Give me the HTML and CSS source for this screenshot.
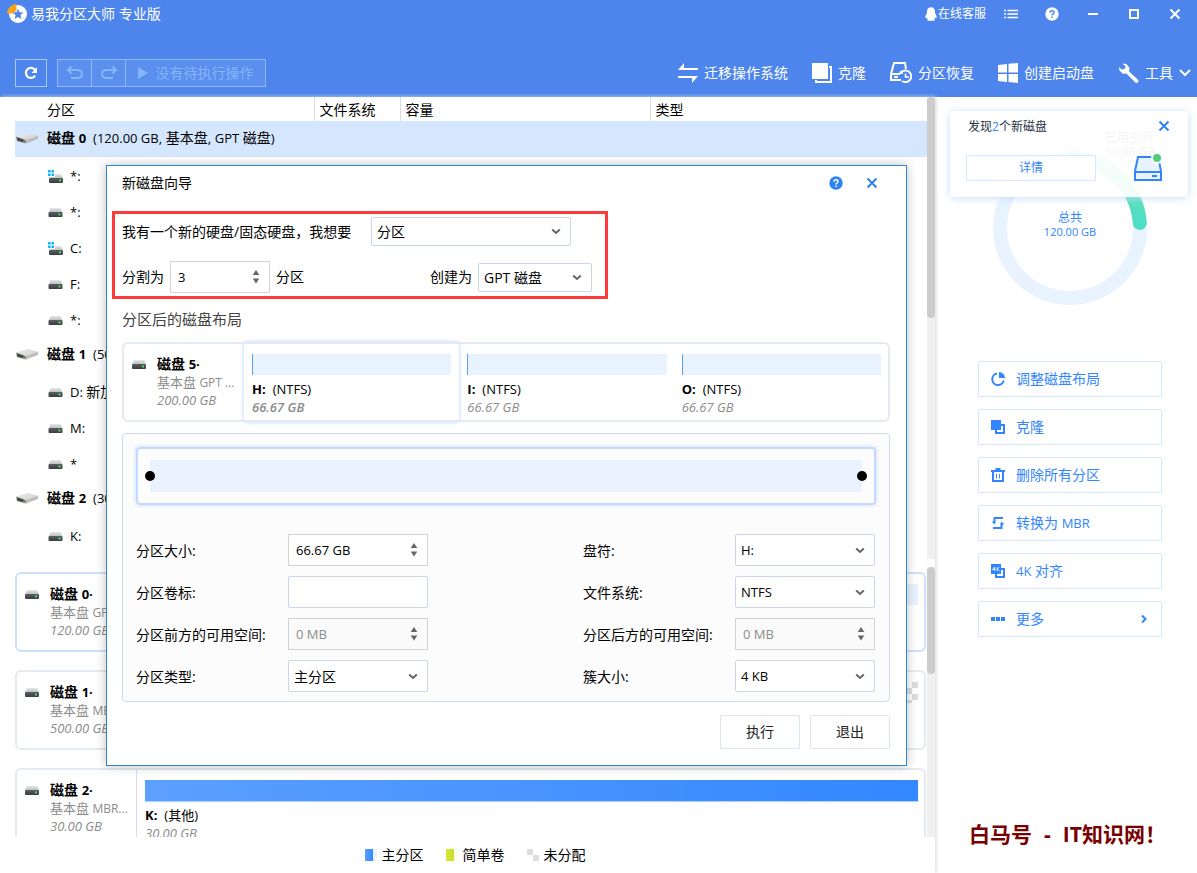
FILE: index.html
```html
<!DOCTYPE html>
<html lang="zh-CN">
<head>
<meta charset="utf-8">
<title>易我分区大师 专业版</title>
<link rel="stylesheet" href="styles.css">
</head>
<body>
<svg class="defs" aria-hidden="true">
  <defs>
    <linearGradient id="lid" x1="0" y1="0" x2="0" y2="1"><stop offset="0" stop-color="#e4e6e8"/><stop offset="1" stop-color="#b9bcc0"/></linearGradient>
    <linearGradient id="front" x1="0" y1="0" x2="0" y2="1"><stop offset="0" stop-color="#5d6063"/><stop offset="1" stop-color="#3a3c3f"/></linearGradient>
    <linearGradient id="top3d" x1="0" y1="0" x2="1" y2="1"><stop offset="0" stop-color="#ededed"/><stop offset="1" stop-color="#cfcfcf"/></linearGradient>
    <linearGradient id="used" x1="0" y1="0" x2="0" y2="1"><stop offset="0" stop-color="#62dd9d"/><stop offset="1" stop-color="#4fdfc8"/></linearGradient>
  </defs>
  <symbol id="volume" viewBox="0 0 14 9"><path d="M2 0h10l2 4.500H0z" fill="url(#lid)"/><rect y="4" width="14" height="5" rx="1" fill="url(#front)"/><rect x="10" y="5.500" width="2" height="2" fill="#3fe05a"/></symbol>
  <symbol id="winvolume" viewBox="0 0 15 13"><path d="M0 0h2.600v2.600H0zM3.400 0H6v2.600H3.400zM0 3.400h2.600V6H0zM3.400 3.400H6V6H3.400z" fill="#12b5f5"/><path d="M7 4h6l2 4.500H1L2.500 7H7z" fill="url(#lid)"/><rect x="1" y="8" width="14" height="5" rx="1" fill="url(#front)"/><rect x="11" y="9.500" width="2" height="2" fill="#3fe05a"/></symbol>
  <symbol id="disk" viewBox="0 0 22 12"><path d="M0 4.500L12 1l10 2.500-12 4.500z" fill="url(#top3d)"/><path d="M0 4.500L10 8v3.500L1 9z" fill="#8b8d88"/><path d="M.8 5.500l6.700 2v2.800l-6-1.600z" fill="#454743"/><path d="M10 8l12-4.500V7l-12 4.500z" fill="#bdbdbd"/><path d="M7.500 8l1.500.500v1.800l-1.500-.4z" fill="#5c9c62"/></symbol>
  <symbol id="chev" viewBox="0 0 10 7"><path d="M1.200 1.500L5 5l3.800-3.500" fill="none" stroke="currentColor" stroke-width="2"/></symbol>
  <symbol id="spin" viewBox="0 0 8 14"><path d="M4 0l3.300 5H.7zM4 13.500L.7 8.500h6.600z" fill="#666"/></symbol>
  <symbol id="cross" viewBox="0 0 12 12"><path d="M1.500 1.500l9 9M10.500 1.500l-9 9" fill="none" stroke="currentColor" stroke-width="2"/></symbol>
  <symbol id="help" viewBox="0 0 14 14"><circle cx="7" cy="7" r="6.700" fill="currentColor"/><path d="M5 5.700C5 4.400 5.900 3.700 7 3.700s2 .7 2 1.700c0 1.400-1.900 1.500-1.900 3" fill="none" stroke="var(--mark)" stroke-width="1.400"/><rect x="6.300" y="9.500" width="1.500" height="1.500" fill="var(--mark)"/></symbol>
</svg>

<div class="app">
  <header class="head">
    <div class="titlebar">
      <svg class="logo" width="20" height="20" viewBox="0 0 20 20"><circle cx="11" cy="10" r="9" fill="#fff"/><path d="M0 9.500C.5 4 4 .5 9.500 0v6.500L6 9.500z" fill="#f9a61a"/><path d="M11 4.500l1.500 3.800 4 .2-3.100 2.600 1.100 4-3.500-2.200L7.600 15l1-3.900-3.100-2.600 4-.2z" fill="#4c85ec"/></svg>
      <h1 class="apptitle">易我分区大师 专业版</h1>
      <a class="service" href="#"><svg width="12" height="14" viewBox="0 0 12 14"><path d="M6 .3c2.600 0 4 1.900 4 4.300v1.600C11.300 8 12 9.800 11.500 11c-.3.600-.9.200-1.300-.4-.2.700-.5 1.200-1 1.700 1 .4.900 1.400-.5 1.400H3.300c-1.400 0-1.500-1-.5-1.400-.5-.5-.8-1-1-1.700-.4.600-1 1-1.300.4C0 9.800.7 8 2 6.200V4.600C2 2.200 3.400.3 6 .3z" fill="#fff"/></svg>在线客服</a>
      <button class="win" aria-label="菜单"><svg width="14" height="10" viewBox="0 0 14 10"><path d="M0 1.500h2M0 5h2M0 8.500h2M3.500 1.500H14M3.500 5H14M3.500 8.500H14" stroke="#fff" stroke-width="1.500"/></svg></button>
      <button class="win" aria-label="帮助"><svg width="14" height="14"><use href="#help"/></svg></button>
      <button class="win" aria-label="最小化"><svg width="10" height="10" viewBox="0 0 10 10"><path d="M0 5h10" stroke="#fff" stroke-width="2"/></svg></button>
      <button class="win" aria-label="最大化"><svg width="10" height="10" viewBox="0 0 10 10"><path d="M1 1h8v8H1z" fill="none" stroke="#fff" stroke-width="2"/></svg></button>
      <button class="win" aria-label="关闭"><svg width="12" height="12"><use href="#cross"/></svg></button>
    </div>
    <div class="toolbar">
      <button class="tool refresh" aria-label="刷新"><svg width="14" height="14" viewBox="0 0 14 14"><path d="M11.200 9.500A5 5 0 1 1 11 4" fill="none" stroke="#fff" stroke-width="2.200"/><path d="M13 1v6H7.500z" fill="#fff"/></svg></button>
      <div class="group">
        <button class="tool" aria-label="撤销" disabled><svg width="18" height="14" viewBox="0 0 18 14"><path d="M2 4h9c3 0 5 1.400 5 4s-2 4-5 4H5M5.500.5L2 4l3.500 3.500" fill="none" stroke="currentColor" stroke-width="2"/></svg></button>
        <button class="tool" aria-label="重做" disabled><svg width="18" height="14" viewBox="0 0 18 14"><path d="M16 4H7C4 4 2 5.400 2 8s2 4 5 4h6M12.500.5L16 4l-3.500 3.500" fill="none" stroke="currentColor" stroke-width="2"/></svg></button>
        <button class="tool pending" disabled><svg width="10" height="12" viewBox="0 0 10 12"><path d="M0 0l10 6-10 6z" fill="currentColor"/></svg>没有待执行操作</button>
      </div>
      <nav class="actions">
        <button class="action"><svg width="20" height="20" viewBox="0 0 20 20"><path d="M0 7l6-7v5h14v2zM0 13h20l-6 7v-5H0z" fill="#fff"/></svg>迁移操作系统</button>
        <button class="action"><svg width="20" height="20" viewBox="0 0 20 20"><path d="M0 0h16v16H0z" fill="#fff"/><path d="M17 4h2v15H4v-2" fill="none" stroke="#fff" stroke-width="2"/></svg>克隆</button>
        <button class="action"><svg width="22" height="22" viewBox="0 0 22 22"><path d="M11 18H1v-6L4 1h11l1 6M1 12h9" fill="none" stroke="#fff" stroke-width="2"/><path d="M4 15h4" stroke="#fff" stroke-width="2"/><path d="M11 10.500A5.800 5.800 0 1 1 12 19" fill="none" stroke="#fff" stroke-width="2"/><path d="M8.500 12.500l2-4 3 3z" fill="#fff"/><path d="M15.500 11.500v3.500h3.500" fill="none" stroke="#fff" stroke-width="1.500"/></svg>分区恢复</button>
        <button class="action"><svg width="20" height="20" viewBox="0 0 20 20"><path d="M0 2l9-1v8.500H0zM10.500.800L20 0v9.500h-9.500zM0 11h9v8l-9-1zM10.500 11H20v9l-9.500-1z" fill="#fff"/></svg>创建启动盘</button>
        <button class="action"><svg width="21" height="20" viewBox="0 0 21 20"><path d="M4 .5l4.500.4 3 4-.5 3.500 8.800 8c1 1 .7 2.300.2 2.900-.8.700-2 .8-3 0L8.500 10.500l-3.700.2L1.500 7.500.8 4l3 2.500 3-.7.800-2.500z" fill="#fff"/></svg>工具<svg width="12" height="8" viewBox="0 0 12 8"><path d="M1 1l5 5 5-5" fill="none" stroke="#fff" stroke-width="2"/></svg></button>
      </nav>
    </div>
  </header>

  <div class="body">
    <main class="main">
      <section class="listing">
        <table class="tree">
          <colgroup><col class="c-name"><col class="c-fs"><col class="c-cap"><col></colgroup>
          <thead><tr><th>分区</th><th>文件系统</th><th>容量</th><th>类型</th></tr></thead>
          <tbody>
            <tr class="selected"><td colspan="4"><div class="diskrow"><svg width="22" height="12"><use href="#disk"/></svg><b>磁盘 <span class="en">0</span></b><span><span class="en">(120.00 GB,</span> 基本盘<span class="en">,</span> <span class="en">GPT</span> 磁盘<span class="en">)</span></span></div></td></tr>
            <tr><td colspan="4"><div class="volrow"><svg width="15" height="13"><use href="#winvolume"/></svg>*:</div></td></tr>
            <tr><td colspan="4"><div class="volrow"><svg width="15" height="9"><use href="#volume"/></svg>*:</div></td></tr>
            <tr><td colspan="4"><div class="volrow"><svg width="15" height="13"><use href="#winvolume"/></svg>C:</div></td></tr>
            <tr><td colspan="4"><div class="volrow"><svg width="15" height="9"><use href="#volume"/></svg>F:</div></td></tr>
            <tr><td colspan="4"><div class="volrow"><svg width="15" height="9"><use href="#volume"/></svg>*:</div></td></tr>
            <tr><td colspan="4"><div class="diskrow"><svg width="22" height="12"><use href="#disk"/></svg><b>磁盘 <span class="en">1</span></b><span class="en">(500.00 GB)</span></div></td></tr>
            <tr><td colspan="4"><div class="volrow"><svg width="15" height="9"><use href="#volume"/></svg><span>D: <span class="cn">新加卷</span></span></div></td></tr>
            <tr><td colspan="4"><div class="volrow"><svg width="15" height="9"><use href="#volume"/></svg>M:</div></td></tr>
            <tr><td colspan="4"><div class="volrow"><svg width="15" height="9"><use href="#volume"/></svg>*</div></td></tr>
            <tr><td colspan="4"><div class="diskrow"><svg width="22" height="12"><use href="#disk"/></svg><b>磁盘 <span class="en">2</span></b><span class="en">(30.00 GB)</span></div></td></tr>
            <tr><td colspan="4"><div class="volrow"><svg width="15" height="9"><use href="#volume"/></svg>K:</div></td></tr>
          </tbody>
        </table>
        <div class="track"><div class="thumb long"></div></div>
      </section>
      <section class="map">
        <div class="cards">
          <article class="card active">
            <div class="info"><svg width="14" height="9"><use href="#volume"/></svg><div><b>磁盘 <span class="en">0·</span></b><p>基本盘 <span class="en">GPT ...</span></p><i>120.00 GB</i></div></div>
            <div class="part"><div class="bar light"></div></div>
          </article>
          <article class="card">
            <div class="info"><svg width="14" height="9"><use href="#volume"/></svg><div><b>磁盘 <span class="en">1·</span></b><p>基本盘 <span class="en">MBR...</span></p><i>500.00 GB</i></div></div>
            <div class="part"><div class="bar checker"></div></div>
          </article>
          <article class="card">
            <div class="info"><svg width="14" height="9"><use href="#volume"/></svg><div><b>磁盘 <span class="en">2·</span></b><p>基本盘 <span class="en">MBR...</span></p><i>30.00 GB</i></div></div>
            <div class="part"><div class="bar full"></div><p class="vol"><b>K:</b>(其他)</p><i>30.00 GB</i></div>
          </article>
        </div>
        <div class="track"><div class="thumb short"></div></div>
      </section>
      <footer class="legend">
        <span class="key"><i class="swatch primary"></i>主分区</span>
        <span class="key"><i class="swatch simple"></i>简单卷</span>
        <span class="key"><i class="swatch free"></i>未分配</span>
      </footer>
    </main>

    <aside class="side">
      <div class="usage">
        <svg width="154" height="154" viewBox="0 0 154 154"><circle cx="77" cy="77" r="70" fill="none" stroke="#e8f3ff" stroke-width="14"/><path d="M77 7A70 70 0 0 1 146.800 72" fill="none" stroke="url(#used)" stroke-width="14" stroke-linecap="round"/></svg>
        <p class="total">总共<br><span>120.00 GB</span></p>
        <p class="usedlabel">已用空间<br>30.08 GB</p>
      </div>
      <div class="ops">
        <button class="op"><svg width="14" height="14" viewBox="0 0 14 14"><path d="M6 1.500A5.800 5.800 0 1 0 12.700 8.500" fill="none" stroke="currentColor" stroke-width="2"/><path d="M8 0a6 6 0 0 1 6 6H8z" fill="currentColor"/></svg>调整磁盘布局</button>
        <button class="op"><svg width="14" height="14" viewBox="0 0 14 14"><path d="M0 0h10v10H0z" fill="currentColor"/><path d="M10 5h3v8H5v-3" fill="none" stroke="currentColor" stroke-width="2"/></svg>克隆</button>
        <button class="op"><svg width="14" height="14" viewBox="0 0 14 14"><path d="M0 3h14M4.500 1h5M2 3v10h10V3" fill="none" stroke="currentColor" stroke-width="2"/><path d="M5.500 6v4.500M8.500 6v4.500" stroke="currentColor"/></svg>删除所有分区</button>
        <button class="op"><svg width="14" height="14" viewBox="0 0 14 14"><path d="M12 2H3.500v5M2 12h8.500V7" fill="none" stroke="currentColor" stroke-width="2"/><path d="M.5 5.500h4L3.500 8.500zM9.500 8.500h4L10.500 5.500z" fill="currentColor"/></svg>转换为 <span class="en">MBR</span></button>
        <button class="op"><svg width="14" height="14" viewBox="0 0 14 14"><path d="M0 0h10v10H0z" fill="currentColor"/><path d="M10 5h3v8H5v-3" fill="none" stroke="currentColor" stroke-width="2"/><path d="M3.500 7V3L1.500 5.500h3M6 3v4M8.500 3L6.300 5l2.200 2" fill="none" stroke="#fff" stroke-width=".8"/></svg><span class="en">4K</span> 对齐</button>
        <button class="op"><svg width="14" height="14" viewBox="0 0 14 14"><path d="M0 5h4v4H0zM5 5h4v4H5zM10 5h4v4h-4z" fill="currentColor"/></svg>更多<svg class="more" width="6" height="10" viewBox="0 0 6 10"><path d="M1 1.500L4.500 5 1 8.500" fill="none" stroke="currentColor" stroke-width="2"/></svg></button>
      </div>
      <p class="mark">白马号<span class="dash">-</span>IT知识网！</p>
      <div class="notice">
        <div class="notice-text">
          <p>发现<em>2</em>个新磁盘</p>
          <button class="detail">详情</button>
        </div>
        <div class="notice-side">
          <button class="bare" aria-label="关闭通知"><svg width="12" height="12"><use href="#cross"/></svg></button>
          <svg width="30" height="28" viewBox="0 0 30 28"><path d="M2 17L5 3h20l3 14" fill="#e8f3ff" stroke="#3385ff" stroke-width="2"/><path d="M2 18h26v8H2z" fill="#e8f3ff" stroke="#3385ff" stroke-width="2"/><path d="M19 22h5" stroke="#3385ff" stroke-width="2"/><circle cx="24" cy="4" r="6" fill="#fff"/><circle cx="24" cy="4" r="4" fill="#53cd7c"/></svg>
        </div>
      </div>
    </aside>
  </div>

  <section class="dialog" role="dialog" aria-labelledby="dlg-title">
    <div class="dlg-head"><h2 id="dlg-title">新磁盘向导</h2>
      <button class="bare" aria-label="向导帮助"><svg width="14" height="14"><use href="#help"/></svg></button>
      <button class="bare" aria-label="关闭向导"><svg width="12" height="12"><use href="#cross"/></svg></button>
    </div>
    <div class="setup">
      <div class="setrow first">
        <label class="want" for="want">我有一个新的硬盘/固态硬盘，我想要</label>
        <span class="field low wide"><select id="want"><option>分区</option></select><svg width="10" height="7"><use href="#chev"/></svg></span>
      </div>
      <div class="setrow">
        <label class="split" for="count">分割为</label>
        <span class="field square narrow"><input id="count" type="text" value="3"><svg width="8" height="14"><use href="#spin"/></svg></span>
        <span class="unit">分区</span>
        <label class="split" for="style">创建为</label>
        <span class="field low style"><select id="style"><option>GPT 磁盘</option></select><svg width="10" height="7"><use href="#chev"/></svg></span>
      </div>
    </div>
    <h3>分区后的磁盘布局</h3>
    <article class="card plan">
      <div class="info"><svg width="14" height="9"><use href="#volume"/></svg><div><b>磁盘 <span class="en">5·</span></b><p>基本盘 <span class="en">GPT ...</span></p><i>200.00 GB</i></div></div>
      <div class="part chosen"><div class="bar empty"></div><p class="vol"><b>H:</b>(NTFS)</p><i>66.67 GB</i></div>
      <div class="part"><div class="bar empty"></div><p class="vol"><b>I:</b>(NTFS)</p><i>66.67 GB</i></div>
      <div class="part"><div class="bar empty"></div><p class="vol"><b>O:</b>(NTFS)</p><i>66.67 GB</i></div>
    </article>
    <div class="panel">
      <div class="resize"><button class="knob" aria-label="起点"></button><div class="span"></div><button class="knob" aria-label="终点"></button></div>
      <form class="form">
        <label for="size">分区大小:</label>
        <span class="field square"><input id="size" type="text" value="66.67 GB"><svg width="8" height="14"><use href="#spin"/></svg></span>
        <label class="right" for="letter">盘符:</label>
        <span class="field"><select id="letter"><option>H:</option></select><svg width="10" height="7"><use href="#chev"/></svg></span>
        <label for="label">分区卷标:</label>
        <span class="field"><input id="label" type="text"></span>
        <label class="right" for="fs">文件系统:</label>
        <span class="field"><select id="fs"><option>NTFS</option></select><svg width="10" height="7"><use href="#chev"/></svg></span>
        <label for="before">分区前方的可用空间:</label>
        <span class="field square off"><input id="before" type="text" value="0 MB" disabled><svg width="8" height="14"><use href="#spin"/></svg></span>
        <label class="right" for="after">分区后方的可用空间:</label>
        <span class="field square off"><input id="after" type="text" value="0 MB" disabled><svg width="8" height="14"><use href="#spin"/></svg></span>
        <label for="kind">分区类型:</label>
        <span class="field"><select id="kind"><option>主分区</option></select><svg width="10" height="7"><use href="#chev"/></svg></span>
        <label class="right" for="cluster">簇大小:</label>
        <span class="field"><select id="cluster"><option>4 KB</option></select><svg width="10" height="7"><use href="#chev"/></svg></span>
      </form>
    </div>
    <div class="dlg-foot"><button>执行</button><button>退出</button></div>
  </section>
</div>
</body>
</html>
```

FILE: styles.css
```css
* { box-sizing: border-box; }
body, h1, h2, h3, p { margin: 0; font-weight: normal; }
body, button, input, select {
  font-family: "Open Sans", "Noto Sans CJK SC", sans-serif;
  font-size: 14px;
}
body { color: #000; line-height: 20px; background: #fff; }
button { padding: 0; border: 0; background: none; color: inherit; line-height: 20px; }
svg { flex: none; display: block; }
.defs { position: absolute; width: 0; height: 0; }
.en { font-size: 13px; }
.cn { font-size: 14px; }

.app { position: relative; display: flex; flex-direction: column; height: 100vh; overflow: hidden; }

/* header */
.head { flex: none; background: #4d85ec; color: #fff; --mark: #4d85ec; }
.titlebar { display: flex; align-items: center; height: 28px; padding: 0 2px 0 7px; }
.apptitle { flex: 1; margin-left: 4px; font-size: 14px; }
.service { display: flex; align-items: center; gap: 1px; margin-right: 4px; color: #fff; font-size: 12px; text-decoration: none; }
.win { display: grid; place-items: center; width: 41px; height: 28px; }
.toolbar { display: flex; align-items: center; gap: 10px; height: 69px; padding: 21px 6px 0 15px; }
.tool { display: grid; place-items: center; width: 34px; height: 28px; }
.refresh { width: 32px; border: 1px solid #a6c8fc; }
.group { display: flex; border: 1px solid #8fb9fa; background: #5a8fee; }
.group .tool { height: 26px; color: #85b5fb; }
.group .tool:first-child { width: 33px; }
.group .tool + .tool { border-left: 1px solid #8fb9fa; }
.group .pending { display: flex; align-items: center; justify-content: center; gap: 8px; width: 140px; }
.actions { display: flex; gap: 24px; margin-left: auto; }
.action { display: flex; align-items: center; gap: 6px; }

/* columns */
.body { flex: 1; display: flex; min-height: 0; }
.main { flex: 1; display: flex; flex-direction: column; min-width: 0; box-shadow: 1px 0 4px #d8d8d8; }
.side { position: relative; display: flex; flex-direction: column; width: 262px; padding: 54px 35px 27px 43px; }
.listing { flex: none; display: flex; height: 462px; padding-left: 15px; }
.track { flex: none; width: 8px; background: #f0f0f0; }
.thumb { border-radius: 4px; background: #ccc; }
.long { height: 221px; }
.short { height: 107px; }

.tree { flex: 1; align-self: flex-start; table-layout: fixed; border-collapse: collapse; }
.c-name { width: 299px; }
.c-fs { width: 86px; }
.c-cap { width: 250px; }
.tree th { height: 24px; padding: 2px 5px 0; border-right: 1px solid #dcdcdc; font-weight: normal; text-align: left; }
.tree th:first-child { padding-left: 32px; }
.tree th:last-child { border-right: 0; }
.tree td { height: 36px; padding: 0; }
.selected { background: #d4e7ff; }
.diskrow { display: flex; align-items: center; gap: 7px; padding: 0 0 2px 1px; }
.diskrow b { margin-left: 2px; }
.volrow { display: flex; align-items: center; gap: 7px; padding: 2px 0 0 33px; font-size: 13px; }

/* disk map */
.map { flex: 1; display: flex; min-height: 0; margin-top: 8px; padding-left: 15px; overflow: hidden; }
.cards { flex: 1; display: flex; flex-direction: column; gap: 18px; padding: 5px 1px 0 0; overflow: hidden; }
.card { flex: none; display: flex; height: 80px; border: 2px solid #e5eaf1; border-radius: 6px; background: #fff; }
.card.active { border-color: #cfe0ff; }
.info { flex: none; display: flex; gap: 11px; width: 120px; padding: 11px 0 0 8px; border-right: 1px solid #d3dded; line-height: 18px; white-space: nowrap; }
.info > svg { margin-top: 5px; }
.info b { display: block; }
.info p { color: #8c8c8c; font-size: 13px; }
.info p .en { font-size: 12px; }
.card i { display: block; color: #8c8c8c; font-size: 13px; line-height: 16px; }
.part { flex: 1; padding: 10px 6px 0 8px; }
.bar { height: 21px; }
.full { background: linear-gradient(90deg, #5c9fff, #3387ff); box-shadow: 0 1px 1px #b5d3ff; }
.light { background: #e8f3ff; }
.checker { background: repeating-conic-gradient(#ddd 0 25%, #fff 0 50%) right 0 top 0 / 12px 12px; }
.empty { border-left: 1px solid #5c9fff; background: #e8f3ff; }
.vol { margin-top: 5px; font-size: 13px; line-height: 19px; }
.vol b { margin-right: 7px; }

.legend { flex: none; display: flex; justify-content: center; gap: 22px; height: 36px; padding-left: 15px; align-items: center; }
.key { display: flex; align-items: center; gap: 5px; }
.swatch { width: 12px; height: 12px; }
.primary { background: linear-gradient(90deg, #5c9fff, #3387ff 8px, #e8f3ff 8px); }
.simple { background: linear-gradient(90deg, #d9e636, #cddb2b 8px, #fbfcec 8px); }
.free { background: repeating-conic-gradient(#fff 0 25%, #ddd 0 50%) 0 0 / 12px 12px; }

/* side panel */
.usage { position: relative; align-self: center; display: grid; place-items: center; width: 154px; height: 154px; }
.usage > * { grid-area: 1 / 1; }
.total { padding-bottom: 6px; color: #3385ff; font-size: 12px; line-height: 14px; text-align: center; }
.total span { font-size: 11px; }
.usedlabel { position: absolute; left: 112px; top: -20px; color: #555; font-size: 12px; line-height: 14px; white-space: nowrap; }
.ops { display: flex; flex-direction: column; gap: 12px; margin-top: 56px; }
.op { display: flex; align-items: center; height: 36px; padding: 0 14px 0 12px; border: 1px solid #d6e6ff; border-radius: 2px; color: #3385ff; white-space: pre; }
.op > svg:first-child { margin-right: 11px; }
.op .more { margin-left: auto; }
.mark { margin: auto -30px 0 -9px; color: #780000; font-size: 21px; font-weight: bold; line-height: 24px; white-space: nowrap; }
.dash { margin: 0 12px; }
.notice { position: absolute; left: 15px; right: 9px; top: 14px; display: flex; justify-content: space-between; height: 86px; padding: 6px 25px 0 16px; border-radius: 4px; background: rgba(255, 255, 255, .93); box-shadow: 0 1px 8px #c6dbfb; color: #263245; font-size: 12px; }
.notice p { padding-left: 2px; }
.notice em { color: #3385ff; font-style: normal; }
.detail { width: 130px; height: 26px; margin-top: 18px; border: 1px solid #d6e6ff; border-radius: 2px; background: #fff; color: #3385ff; font-size: 12px; }
.notice-side { display: flex; flex-direction: column; align-items: flex-end; gap: 22px; padding-top: 3px; }
.bare { display: block; color: #2d83f0; }
.notice-side .bare { margin-right: -7px; }

/* wizard */
.dialog { position: absolute; left: 106px; right: 290px; top: 165px; padding: 0 16px 16px 15px; border: 1px solid #2f86cb; background: #fff; box-shadow: 0 0 10px rgba(0, 0, 0, .25); --mark: #fff; }
.dlg-head { display: flex; align-items: center; gap: 23px; height: 35px; padding: 0 12px 2px 0; }
.dlg-head h2 { flex: 1; font-size: 14px; }
.setup { display: flex; flex-direction: column; gap: 14px; width: 496px; margin: 10px 0 0 -10px; padding: 3px 7px; border: 3px solid #ff3a3a; }
.setrow { display: flex; align-items: center; height: 32px; }
.setrow.first { align-items: flex-start; height: 30px; line-height: 30px; }
.want { width: 249px; white-space: nowrap; }
.split { width: 48px; }
.unit { flex: none; width: 160px; padding-left: 6px; }
.wide { width: 200px; }
.narrow { width: 100px; }
.style { width: 114px; }
.dialog h3 { height: 43px; color: #444; font-size: 15px; line-height: 40px; }
.dialog .part { padding: 10px 7px 0 8px; }
.dialog .chosen { margin: -2px 0; padding: 12px 8px 0; border-radius: 4px; box-shadow: 0 0 0 1px #dfeaff, 0 0 4px #b9d2ff; }
.chosen i { font-weight: 600; }
.panel { margin-top: 11px; padding: 13px 13px 9px; border: 1px solid #d0d9e8; border-radius: 4px; background: #fcfcfc; }
.resize { display: flex; align-items: center; height: 58px; padding: 0 7px; border: 2px solid #c3d9ff; border-radius: 4px; box-shadow: 0 0 4px #c3d9ff; }
.span { flex: 1; height: 32px; margin: 0 -5px; background: #e8f3ff; }
.knob { z-index: 1; width: 10px; height: 10px; border-radius: 50%; background: #000; }
.form { display: grid; grid-template-columns: 152px 140px 1fr 140px; gap: 10px 0; align-items: center; margin: 29px 1px 0 0; }
.form label { padding-top: 2px; }
.right { justify-self: end; width: 152px; }
.field { display: grid; align-items: center; height: 32px; border: 1px solid #ccd6e6; border-radius: 2px; background: #fff; color: #666; }
.low { height: 29px; }
.square { border-color: #d3d3d3; border-radius: 0; }
.field > * { grid-area: 1 / 1; }
.field > svg { justify-self: end; margin-right: 9px; pointer-events: none; }
.field input, .field select { appearance: none; width: 100%; height: 100%; min-width: 0; padding: 0 5px; border: 0; background: none; color: #000; font-size: 13px; }
#want, #kind, #style { font-size: 14px; }
.field input { padding: 0 7px; }
.off { background: #fafafa; }
.off input { color: #8c8c8c; }
.dlg-foot { display: flex; justify-content: flex-end; gap: 10px; margin-top: 13px; }
.dlg-foot button { width: 80px; height: 34px; border: 1px solid #dbe3ee; border-radius: 2px; color: #222; }
```
